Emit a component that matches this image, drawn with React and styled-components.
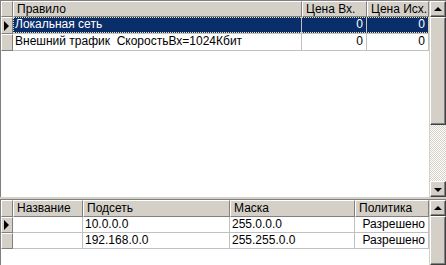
import React from "react";
import styled, { createGlobalStyle } from "styled-components";

const Global = createGlobalStyle`
  html, body { margin: 0; padding: 0; background: #d4d0c8; }
  body { font-family: "Liberation Sans", Arial, sans-serif; font-size: 12px; }
`;

const Page = styled.div`
  width: 446px;
  height: 265px;
  overflow: hidden;
  display: flex;
  flex-direction: column;
  background: #d4d0c8;
`;

const GridBox = styled.div`
  display: flex;
  height: ${(p) => p.$h}px;
  flex: ${(p) => (p.$h ? "none" : "1")};
  border-top: 1px solid #808080;
  border-left: 1px solid #808080;
  background: #fff;
  overflow: hidden;
`;

const Splitter = styled.div`
  height: 2px;
  background: #d4d0c8;
  flex: none;
`;

const Table = styled.div`
  flex: 1;
  display: flex;
  flex-direction: column;
  background: #fff;
`;

const Row = styled.div`
  display: grid;
  grid-template-columns: ${(p) => p.$cols};
  height: ${(p) => p.$h || 16}px;
  position: relative;
`;

const HeadCell = styled.div`
  background: #d4d0c8;
  border-top: 1px solid #fff;
  border-left: 1px solid #fff;
  border-right: 1px solid #808080;
  border-bottom: 1px solid #808080;
  padding: 0 3px;
  line-height: 14px;
  color: #000;
  white-space: nowrap;
  overflow: hidden;
  text-align: ${(p) => p.$align || "left"};
`;

const Indicator = styled.div`
  background: #d4d0c8;
  border-top: 1px solid #fff;
  border-left: 1px solid #fff;
  border-right: 1px solid #808080;
  border-bottom: 1px solid #808080;
  display: flex;
  align-items: center;
  justify-content: center;
`;

const Arrow = styled.div`
  width: 0;
  height: 0;
  border-top: 5px solid transparent;
  border-bottom: 5px solid transparent;
  border-left: 5px solid #000;
  margin-left: -1px;
`;

const Cell = styled.div`
  border-right: 1px solid #c0c0c0;
  border-bottom: 1px solid #c0c0c0;
  padding: 0 3px 0 2px;
  line-height: 15px;
  white-space: pre;
  overflow: hidden;
  text-align: ${(p) => p.$align || "left"};
  background: ${(p) => (p.$sel ? "#0a2e6a" : "#fff")};
  color: ${(p) => (p.$sel ? "#fff" : "#000")};
`;

const Focus = styled.div`
  position: absolute;
  left: 12px;
  right: 0;
  top: 0;
  bottom: 1px;
  border: 1px dotted #e8e0a0;
  pointer-events: none;
`;

const Scroll = styled.div`
  width: 16px;
  flex: none;
  display: flex;
  flex-direction: column;
  background-color: #fff;
  background-image: repeating-conic-gradient(#d4d0c8 0 25%, #fff 0 50%);
  background-size: 2px 2px;
  border-left: 1px solid #d4d0c8;
`;

const SButton = styled.div`
  height: 16px;
  flex: none;
  box-sizing: border-box;
  background: #d4d0c8;
  border-top: 1px solid #fff;
  border-left: 1px solid #fff;
  border-right: 1px solid #404040;
  border-bottom: 1px solid #404040;
  box-shadow: inset -1px -1px 0 #808080;
  display: flex;
  align-items: center;
  justify-content: center;
`;

const Thumb = styled.div`
  height: ${(p) => p.$h}px;
  flex: ${(p) => (p.$h ? "none" : "1")};
  box-sizing: border-box;
  background: #d4d0c8;
  border-top: 1px solid #fff;
  border-left: 1px solid #fff;
  border-right: 1px solid #404040;
  border-bottom: 1px solid #404040;
  box-shadow: inset -1px -1px 0 #808080;
`;

const Track = styled.div`
  flex: 1;
`;

const Tri = styled.div`
  width: 0;
  height: 0;
  border-left: 4px solid transparent;
  border-right: 4px solid transparent;
  ${(p) =>
    p.$down
      ? "border-top: 4px solid #000; margin-top: 1px;"
      : "border-bottom: 4px solid #000; margin-top: -1px;"}
`;

const topCols = "12px 289px 65px 1fr";
const botCols = "12px 70px 147px 125px 1fr";

const topRows = [
  { name: "Локальная сеть", inp: "0", out: "0", sel: true },
  { name: "Внешний трафик  СкоростьВх=1024Кбит", inp: "0", out: "0" },
];

const botRows = [
  { name: "", net: "10.0.0.0", mask: "255.0.0.0", pol: "Разрешено", cur: true },
  { name: "", net: "192.168.0.0", mask: "255.255.0.0", pol: "Разрешено" },
];

export default function App() {
  return (
    <Page>
      <Global />
      <GridBox $h={196}>
        <Table>
          <Row $cols={topCols} $h={16}>
            <Indicator />
            <HeadCell>Правило</HeadCell>
            <HeadCell>Цена Вх.</HeadCell>
            <HeadCell>Цена Исх.</HeadCell>
          </Row>
          {topRows.map((r, i) => (
            <Row key={i} $cols={topCols} $h={17}>
              <Indicator>{r.sel && <Arrow />}</Indicator>
              <Cell $sel={r.sel}>{r.name}</Cell>
              <Cell $sel={r.sel} $align="right">{r.inp}</Cell>
              <Cell $sel={r.sel} $align="right">{r.out}</Cell>
              {r.sel && <Focus />}
            </Row>
          ))}
        </Table>
        <Scroll>
          <SButton><Tri /></SButton>
          <Thumb $h={108} />
          <Track />
          <SButton><Tri $down /></SButton>
        </Scroll>
      </GridBox>
      <Splitter />
      <GridBox>
        <Table>
          <Row $cols={botCols} $h={17}>
            <Indicator />
            <HeadCell>Название</HeadCell>
            <HeadCell>Подсеть</HeadCell>
            <HeadCell>Маска</HeadCell>
            <HeadCell>Политика</HeadCell>
          </Row>
          {botRows.map((r, i) => (
            <Row key={i} $cols={botCols} $h={16}>
              <Indicator>{r.cur && <Arrow />}</Indicator>
              <Cell>{r.name}</Cell>
              <Cell>{r.net}</Cell>
              <Cell>{r.mask}</Cell>
              <Cell $align="right">{r.pol}</Cell>
            </Row>
          ))}
        </Table>
        <Scroll>
          <SButton><Tri /></SButton>
          <Thumb />
        </Scroll>
      </GridBox>
    </Page>
  );
}
